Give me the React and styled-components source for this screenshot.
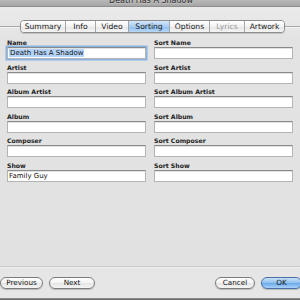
import React from 'react'
import styled, { createGlobalStyle } from 'styled-components'

const GlobalStyle = createGlobalStyle`
  html, body {
    margin: 0;
    padding: 0;
    background: #e3e3e3;
  }
  * {
    box-sizing: border-box;
  }
`

const tabs = [
  { name: 'Summary', w: 44 },
  { name: 'Info', w: 30 },
  { name: 'Video', w: 33 },
  { name: 'Sorting', w: 41, active: true },
  { name: 'Options', w: 40 },
  { name: 'Lyrics', w: 35, disabled: true },
  { name: 'Artwork', w: 40 },
]

const rows = [
  ['Name', 'Sort Name'],
  ['Artist', 'Sort Artist'],
  ['Album Artist', 'Sort Album Artist'],
  ['Album', 'Sort Album'],
  ['Composer', 'Sort Composer'],
  ['Show', 'Sort Show'],
]

const values = {
  Name: 'Death Has A Shadow',
  Show: 'Family Guy',
}

export default function App() {
  return (
    <>
      <GlobalStyle />
      <Window>
        <TitleBar>
          <Title>Death Has A Shadow</Title>
        </TitleBar>

        <TabRow>
          <Rule $w="20px" />
          <TabGroup>
            {tabs.map((t, i) => (
              <Tab
                key={t.name}
                $w={t.w}
                $active={t.active}
                $disabled={t.disabled}
                $first={i === 0}
              >
                {t.name}
              </Tab>
            ))}
          </TabGroup>
          <Rule />
        </TabRow>

        <Form>
          {rows.map(([left, right]) => (
            <React.Fragment key={left}>
              <Field>
                <Label>{left}</Label>
                <Input $focused={left === 'Name'}>
                  {left === 'Name' ? (
                    <Selected>{values[left]}</Selected>
                  ) : (
                    values[left]
                  )}
                </Input>
              </Field>
              <Field>
                <Label>{right}</Label>
                <Input />
              </Field>
            </React.Fragment>
          ))}
        </Form>

        <Footer>
          <ButtonGroup>
            <Button $w={43}>Previous</Button>
            <Button $w={46}>Next</Button>
          </ButtonGroup>
          <ButtonGroup>
            <Button $w={40}>Cancel</Button>
            <Button $w={41} $primary>OK</Button>
          </ButtonGroup>
        </Footer>
        <BottomEdge />
      </Window>
    </>
  )
}

const Window = styled.div`
  width: 300px;
  height: 300px;
  overflow: hidden;
  display: flex;
  flex-direction: column;
  background: linear-gradient(#ececec, #e3e3e3 40px, #e1e1e1);
  font-family: "DejaVu Sans", "Liberation Sans", sans-serif;
  color: #1a1a1a;
`

const TitleBar = styled.div`
  height: 7px;
  flex: 0 0 7px;
  overflow: hidden;
  display: flex;
  align-items: flex-end;
  justify-content: center;
  background: linear-gradient(#b8b8b8, #a6a6a6);
  border-bottom: 1px solid #8e8e8e;
`

const Title = styled.div`
  font-size: 8px;
  line-height: 10px;
  color: #2a2a2a;
  margin-left: 2px;
  text-shadow: 0 1px 0 rgba(255, 255, 255, 0.35);
`

const TabRow = styled.div`
  display: flex;
  align-items: center;
  margin-top: 13px;
  height: 13px;
`

const Rule = styled.div`
  flex: ${p => (p.$w ? `0 0 ${p.$w}` : '1')};
  height: 1px;
  background: #a9a9a9;
  box-shadow: 0 1px 0 #f4f4f4;
`

const TabGroup = styled.div`
  display: flex;
  height: 13px;
  border: 1px solid #8c8c8c;
  border-radius: 4px;
  overflow: hidden;
  box-shadow: 0 1px 1px rgba(0, 0, 0, 0.15);
`

const Tab = styled.div`
  width: ${p => p.$w}px;
  display: flex;
  align-items: center;
  justify-content: center;
  font-size: 7.6px;
  color: ${p => (p.$disabled ? '#9a9a9a' : '#1a1a1a')};
  background: ${p =>
    p.$active
      ? 'linear-gradient(#d4e6fa, #a9cdf3 50%, #8dbcee 51%, #b7d8f8)'
      : 'linear-gradient(#ffffff, #f3f3f3 50%, #e6e6e6 51%, #f4f4f4)'};
  border-left: ${p => (p.$first ? 'none' : '1px solid #a6a6a6')};
`

const Form = styled.div`
  display: grid;
  grid-template-columns: 139px 139px;
  column-gap: 8px;
  row-gap: 3.5px;
  padding: 0 7px;
  margin-top: 5px;
`

const Field = styled.div`
  display: flex;
  flex-direction: column;
`

const Label = styled.div`
  font-size: 6.2px;
  font-weight: bold;
  line-height: 9px;
  color: #222;
`

const Input = styled.div`
  height: 12px;
  background: #fff;
  border: 1px solid #b4b4b4;
  border-top-color: #8a8a8a;
  box-shadow: ${p =>
    p.$focused
      ? '0 0 0 1.5px #88b3e6, inset 0 1px 0 #e2e2e2'
      : 'inset 0 1px 0 #e2e2e2'};
  font-size: 7px;
  line-height: 10px;
  padding-left: 1px;
  color: #111;
  white-space: nowrap;
  overflow: hidden;
`

const Selected = styled.span`
  background: #b5d4fb;
  padding: 0 1px;
`

const Footer = styled.div`
  margin-top: auto;
  border-top: 1px solid #c9c9c9;
  box-shadow: inset 0 1px 0 #efefef;
  background: #e6e6e6;
  height: 32px;
  display: flex;
  justify-content: space-between;
  align-items: flex-start;
  padding-top: 9.5px;
  margin-right: -2px;
`

const ButtonGroup = styled.div`
  display: flex;
  gap: 6px;
`

const Button = styled.div`
  width: ${p => p.$w}px;
  height: 12px;
  border-radius: 6px;
  border: 1px solid ${p => (p.$primary ? '#4a6fa5' : '#7c7c7c')};
  background: ${p =>
    p.$primary
      ? 'linear-gradient(#c9e0f8, #8fc0ef 50%, #6aa7e8 51%, #a9d3fb)'
      : 'linear-gradient(#ffffff, #f2f2f2 50%, #e4e4e4 51%, #f6f6f6)'};
  box-shadow: 0 1px 1px rgba(0, 0, 0, 0.2);
  display: flex;
  align-items: center;
  justify-content: center;
  font-size: 7.2px;
  color: #111;
`

const BottomEdge = styled.div`
  height: 2px;
  flex: 0 0 2px;
  background: linear-gradient(#9a9a9a, #5a5a5a);
`
